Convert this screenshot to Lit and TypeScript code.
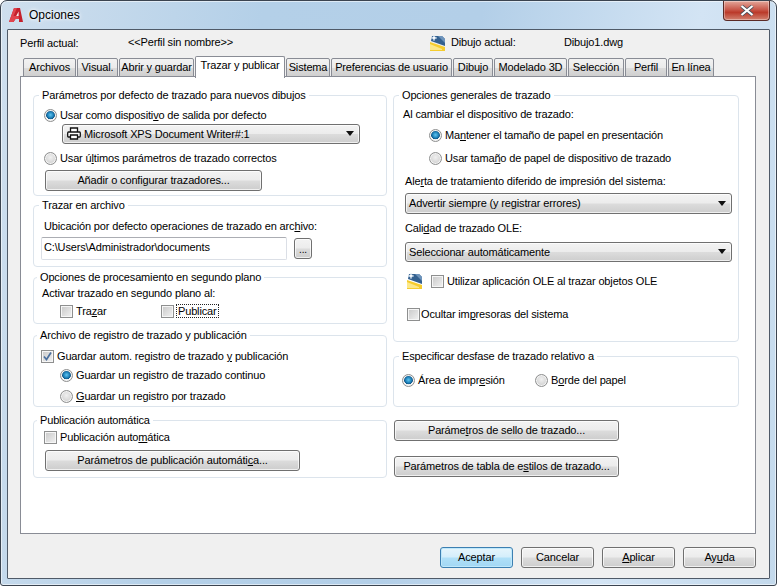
import { LitElement, html, css, svg } from "lit";
import { customElement } from "lit/decorators.js";

const TABS: [string, number, boolean?][] = [
  ["Archivos", 53], ["Visual.", 41], ["Abrir y guardar", 75], ["Trazar y publicar", 90, true],
  ["Sistema", 44], ["Preferencias de usuario", 121], ["Dibujo", 40], ["Modelado 3D", 73],
  ["Selección", 56], ["Perfil", 42], ["En línea", 46],
];

const radio = (on: boolean) => html`<span class="radio ${on ? "on" : ""}"></span>`;
const check = (on = false) => html`<span class="check">${on
  ? svg`<svg viewBox="0 0 11 11" width="11" height="11"><path d="M2 5.5 L4.5 8.5 L9 1.5" fill="none" stroke="#4a6f9e" stroke-width="1.7"/></svg>`
  : ""}</span>`;
const arrow = svg`<svg class="arrow" viewBox="0 0 8 5" width="8" height="5"><path d="M0 0H8L4 5Z" fill="#111"/></svg>`;
const drawingIcon = svg`<svg viewBox="0 0 16 16" width="16" height="16">
  <path d="M0 7 L0 16 L15 16 L15 12 Z" fill="#f5cc2e"/>
  <path d="M0 15 L0 9 L12 14 L12 15 Z" fill="#fbe88a"/>
  <path d="M2 1 L12 1 L15 4 L15 11 L1 6 Z" fill="#33608f"/>
  <path d="M8 1 L12 1 L15 4 L15 8 Z" fill="#6d93bb"/>
  <path d="M4 0 L4.8 2 L7 3 L4.8 3.8 L4 6 L3.2 3.8 L1 3 L3.2 2 Z" fill="#fff" stroke="#cfe0f2" stroke-width=".4"/>
</svg>`;

@customElement("app-root")
export class AppRoot extends LitElement {
  static styles = css`
    :host {
      display: block; width: 777px; height: 586px; box-sizing: border-box;
      font: 11px/14px "Liberation Sans", Arial, sans-serif; letter-spacing: -0.15px; color: #000;
    }
    * { box-sizing: border-box; }
    .window {
      width: 777px; height: 586px; display: flex; flex-direction: column;
      border: 1px solid #3b4450; border-radius: 7px 7px 3px 3px;
      background: linear-gradient(100deg, #cfdfee 0%, #b4d0e8 30%, #b3cfe8 55%, #d3e4f4 80%, #c3d9ec 100%);
      box-shadow: inset 0 0 0 1px rgba(255,255,255,.55);
    }
    .title { height: 28px; flex: none; display: flex; align-items: flex-start; }
    .logo { margin: 7px 0 0 8px; }
    .title-text { margin: 7px 0 0 6px; font-size: 12px; letter-spacing: 0; line-height: 15px; text-shadow: 0 0 5px #fff, 0 0 3px #fff; }
    .close {
      margin-left: auto; margin-right: 6px; width: 47px; height: 20px; display: flex; align-items: center; justify-content: center;
      border: 1px solid #5a2a26; border-top: 0; border-radius: 0 0 4px 4px;
      background: linear-gradient(#e4a79b 0%, #c9584a 45%, #bb3a2a 60%, #d28270 100%);
      box-shadow: inset 0 0 0 1px rgba(255,255,255,.35);
    }
    .body {
      flex: 1; margin: 0 6px 6px 6px; border: 1px solid #4f5a68; background: #f0f0f0;
      display: flex; flex-direction: column; border-radius: 1px;
    }
    .head { height: 27px; flex: none; position: relative; display: flex; align-items: center; padding-bottom: 3px; }
    .head span { flex: none; }
    .h-a { margin-left: 12px; width: 108px; padding-top: 2px; }
    .h-b { width: 302px; }
    .h-icon { width: 21px; height: 16px; margin-top: 2px; }
    .h-c { width: 113px; }
    .tabs { display: flex; align-items: flex-end; height: 20px; margin: 0 0 -1px 15px; position: relative; z-index: 1; flex: none; }
    .tab {
      height: 19px; margin-right: 1px; flex: none; text-align: center; line-height: 16px; white-space: nowrap;
      border: 1px solid #898c95; border-bottom: 1px solid #898c95; border-radius: 2px 2px 0 0;
      background: linear-gradient(#f2f2f2 0%, #ebebeb 50%, #dcdcdc 51%, #cfcfcf 100%);
    }
    .tab.active { height: 22px; background: #fff; border-bottom: 0; margin-bottom: -1px; line-height: 17px; }
    .page {
      margin: 0 13px 0 12px; height: 458px; flex: none; background: #fff; border: 1px solid #898c95;
      padding: 11px 0 0 12px; display: grid; grid-template-columns: 354px 346px; column-gap: 6px; align-items: start;
    }
    .col { display: flex; flex-direction: column; }
    fieldset {
      margin: 0; padding: 0; min-width: 0; border: 1px solid #dce4ec; border-radius: 4px;
    }
    legend { padding: 0 3px; margin-left: 5px; line-height: 14px; height: 14px; }
    .leg-l { margin-left: 3px; }
    .g1 { height: 108px; } .g2 { height: 69px; margin-top: 2px; } .g3 { height: 54px; margin-top: 3px; }
    .g4 { height: 79px; margin-top: 4px; } .g5 { height: 65px; margin-top: 6px; }
    .r1 { height: 254px; } .r2 { height: 58px; margin-top: 7px; }
    .inner { display: flex; flex-direction: column; align-items: flex-start; }
    .in1 { padding: 6px 0 0 10px; }
    .in2 { padding: 7px 0 0 10px; }
    .in3 { padding: 2px 0 0 8px; }
    .in4 { padding: 7px 0 0 7px; }
    .in5 { padding: 3px 0 0 10px; }
    .inr1 { padding: 5px 0 0 9px; }
    .inr2 { padding: 10px 0 0 8px; }
    .row { display: flex; align-items: center; height: 14px; white-space: nowrap; flex: none; }
    .mt2 { margin-top: 2px; } .mt4 { margin-top: 4px; } .mt5 { margin-top: 5px; } .mt6 { margin-top: 6px; }
    .mt7 { margin-top: 7px; } .mt9 { margin-top: 9px; } .mt11 { margin-top: 11px; } .mt18 { margin-top: 18px; }
    .radio {
      width: 13px; height: 13px; border-radius: 50%; flex: none; margin-right: 3px; border: 1px solid #8e8f8f;
      background: radial-gradient(circle at 50% 40%, #f0f0f0, #c6c6c6);
      box-shadow: inset 0 0 0 1px #f4f4f4;
    }
    .radio.on { background: radial-gradient(circle at 50% 45%, #5ec5f2 0%, #1a7cb4 38%, #0d4f80 52%, #f3f3f3 56%, #dcdcdc 100%); }
    .check {
      width: 13px; height: 13px; flex: none; margin-right: 3px; border: 1px solid #8e8f8f; display: flex;
      align-items: center; justify-content: center;
      background: linear-gradient(135deg, #c8c8c8, #f2f2f2);
      box-shadow: inset 0 0 0 1px #f6f6f6;
    }
    .btn {
      height: 21px; display: flex; align-items: center; justify-content: center; flex: none; white-space: nowrap;
      border: 1px solid #707070; border-radius: 3px; padding-bottom: 1px;
      background: linear-gradient(#f3f3f3 0%, #ececec 48%, #dcdcdc 52%, #cdcdcd 100%);
      box-shadow: inset 0 0 0 1px rgba(255,255,255,.7);
    }
    .default { border-color: #3c7fb1; background: linear-gradient(#e6f5fc 0%, #d4eefb 48%, #b0e0f8 52%, #a2d7f4 100%); box-shadow: inset 0 0 0 1px #bfe8fb; }
    .w-add { width: 217px; margin-left: 1px; }
    .w-pub { width: 255px; margin-left: 1px; }
    .w-side { width: 225px; margin-left: 1px; }
    .side-1 { margin-top: 13px; }
    .side-2 { margin-top: 15px; }
    .dd {
      display: flex; align-items: center; position: relative; flex: none; white-space: nowrap;
      border: 1px solid #707070; border-radius: 3px; padding: 0 3px 1px 3px; height: 20px;
      background: linear-gradient(#f3f3f3 0%, #ececec 48%, #dcdcdc 52%, #cdcdcd 100%);
      box-shadow: inset 0 0 0 1px rgba(255,255,255,.7);
    }
    .arrow { margin-left: auto; margin-right: 2px; }
    .dd-print { width: 298px; margin-left: 18px; }
    .printer { margin: 0 3px 0 1px; }
    .dd-wide { width: 327px; margin-left: 2px; }
    .dd-t { height: 21px; }
    .file { display: flex; align-items: center; margin-left: -3px; }
    .input {
      width: 246px; height: 23px; border: 1px solid #dbdfe6; border-top-color: #abadb3; border-radius: 2px; padding: 0 0 3px 2px;
      display: flex; align-items: center; background: #fff;
    }
    .browse { width: 18px; height: 21px; margin-left: 7px; align-items: flex-end; padding-bottom: 3px; font-size: 10px; line-height: 10px; }
    .trazar { width: 101px; margin-left: 18px; }
    .pub { border: 1px dotted #222; height: 14px; line-height: 12px; padding: 0 1px; margin-left: -1px; }
    .ind { margin-left: 19px; }
    .ind-r { margin-left: 26px; }
    .al { margin-left: 2px; }
    .oc { margin-left: 4px; }
    .oc .check { margin-right: 1px; }
    .ole-icon { width: 24px; height: 16px; margin-left: 4px; flex: none; }
    .ole { height: 16px; }
    .area { width: 133px; }
    .foot { flex: 1; display: flex; justify-content: flex-end; align-items: flex-start; gap: 8px; padding: 13px 13px 0 0; }
    .foot .btn { width: 73px; }
    u { text-underline-offset: 1px; }
  `;

  render() {
    return html`<div class="window">
      <div class="title">
        <svg class="logo" viewBox="0 0 14 14" width="14" height="14">
          <path d="M5 0 H11 L14 14 H10 V11 H6.5 L4.5 14 H0 Z" fill="#c4202c"/>
          <path d="M5 0 H8 L4.5 8 H9.5 L10 11 H6.5 L4.5 14 H0 Z" fill="#e0444e"/>
          <path d="M9.6 3.5 V8 H7.2 Z" fill="#f6efef"/>
        </svg>
        <span class="title-text">Opciones</span>
        <div class="close">
          <svg viewBox="0 0 14 11" width="14" height="11"><path d="M1.5 1 L12.5 10 M12.5 1 L1.5 10" stroke="#46505c" stroke-width="3.6"/><path d="M1.5 1 L12.5 10 M12.5 1 L1.5 10" stroke="#fff" stroke-width="2.2"/></svg>
        </div>
      </div>
      <div class="body">
        <div class="head">
          <span class="h-a">Perfil actual:</span>
          <span class="h-b">&lt;&lt;Perfil sin nombre&gt;&gt;</span>
          <span class="h-icon">${drawingIcon}</span>
          <span class="h-c">Dibujo actual:</span>
          <span>Dibujo1.dwg</span>
        </div>
        <div class="tabs">
          ${TABS.map(([t, w, a]) => html`<div class="tab ${a ? "active" : ""}" style="width:${w}px">${t}</div>`)}
        </div>
        <div class="page">
          <div class="col">
            <fieldset class="g1"><legend>Parámetros por defecto de trazado para nuevos dibujos</legend>
              <div class="inner in1">
                <div class="row">${radio(true)}<span class="t">Usar como dispositi<u>v</u>o de salida por defecto</span></div>
                <div class="dd dd-print mt2">
                  <svg class="printer" viewBox="0 0 14 13" width="14" height="13"><path d="M3.5 5V1H10.5V5M3.5 10H1.5Q.7 10 .7 9V6Q.7 5 1.5 5H12.5Q13.3 5 13.3 6V9Q13.3 10 12.5 10H10.5M3.5 8H10.5V12H3.5Z" fill="#fff" stroke="#111" stroke-width="1.3"/></svg>
                  Microsoft XPS Document Writer#:1${arrow}
                </div>
                <div class="row mt7">${radio(false)}<span>Usar ú<u>l</u>timos parámetros de trazado correctos</span></div>
                <div class="btn w-add mt5">Añadir o confi<u>g</u>urar trazadores...</div>
              </div>
            </fieldset>
            <fieldset class="g2"><legend>Trazar en archivo</legend>
              <div class="inner in2">
                <div class="row">Ubicación por defecto operaciones de trazado en arc<u>h</u>ivo:</div>
                <div class="file mt4">
                  <div class="input">C:\\Users\\Administrador\\documents</div>
                  <div class="btn browse">...</div>
                </div>
              </div>
            </fieldset>
            <fieldset class="g3"><legend class="leg-l">Opciones de procesamiento en segundo plano</legend>
              <div class="inner in3">
                <div class="row">Activar trazado en segundo plano al:</div>
                <div class="row mt4">
                  <span class="row trazar">${check()}<span>Tra<u>z</u>ar</span></span>
                  <span class="row">${check()}<span class="pub">Publicar</span></span>
                </div>
              </div>
            </fieldset>
            <fieldset class="g4"><legend class="leg-l">Archivo de registro de trazado y publicación</legend>
              <div class="inner in4">
                <div class="row">${check(true)}<span>Guardar autom. registro de trazado <u>y</u> publicación</span></div>
                <div class="row mt5 ind">${radio(true)}<span>Guardar un registro de trazado continuo</span></div>
                <div class="row mt7 ind">${radio(false)}<span><u>G</u>uardar un registro por trazado</span></div>
              </div>
            </fieldset>
            <fieldset class="g5"><legend class="leg-l">Publicación automática</legend>
              <div class="inner in5">
                <div class="row">${check()}<span>Publicación auto<u>m</u>ática</span></div>
                <div class="btn w-pub mt6">Parámetros de publicación automáti<u>c</u>a...</div>
              </div>
            </fieldset>
          </div>
          <div class="col">
            <fieldset class="r1"><legend>Opciones generales de trazado</legend>
              <div class="inner inr1">
                <div class="row">Al cambiar el dispositivo de trazado:</div>
                <div class="row mt7 ind-r">${radio(true)}<span>Ma<u>n</u>tener el tamaño de papel en presentación</span></div>
                <div class="row mt9 ind-r">${radio(false)}<span>Usar tama<u>ñ</u>o de papel de dispositivo de trazado</span></div>
                <div class="row mt9 al">Ale<u>r</u>ta de tratamiento diferido de impresión del sistema:</div>
                <div class="dd dd-wide dd-t mt5">Advertir siempre (y registrar errores)${arrow}</div>
                <div class="row mt7 al">Cali<u>d</u>ad de trazado OLE:</div>
                <div class="dd dd-wide mt7">Seleccionar automáticamente${arrow}</div>
                <div class="row ole mt11"><span class="ole-icon">${drawingIcon}</span>${check()}<span>Utilizar aplicación OLE al trazar ob<u>j</u>etos OLE</span></div>
                <div class="row mt18 oc">${check()}<span>Ocultar im<u>p</u>resoras del sistema</span></div>
              </div>
            </fieldset>
            <fieldset class="r2"><legend>Especificar desfase de trazado relativo a</legend>
              <div class="inner inr2">
                <div class="row">
                  <span class="row area">${radio(true)}<span>Área de impr<u>e</u>sión</span></span>
                  <span class="row">${radio(false)}<span>B<u>o</u>rde del papel</span></span>
                </div>
              </div>
            </fieldset>
            <div class="btn w-side side-1">Paráme<u>t</u>ros de sello de trazado...</div>
            <div class="btn w-side side-2">Parámetros de tabla de e<u>s</u>tilos de trazado...</div>
          </div>
        </div>
        <div class="foot">
          <div class="btn default">Aceptar</div>
          <div class="btn">Cancelar</div>
          <div class="btn"><span><u>A</u>plicar</span></div>
          <div class="btn"><span>Ay<u>u</u>da</span></div>
        </div>
      </div>
    </div>`;
  }
}
